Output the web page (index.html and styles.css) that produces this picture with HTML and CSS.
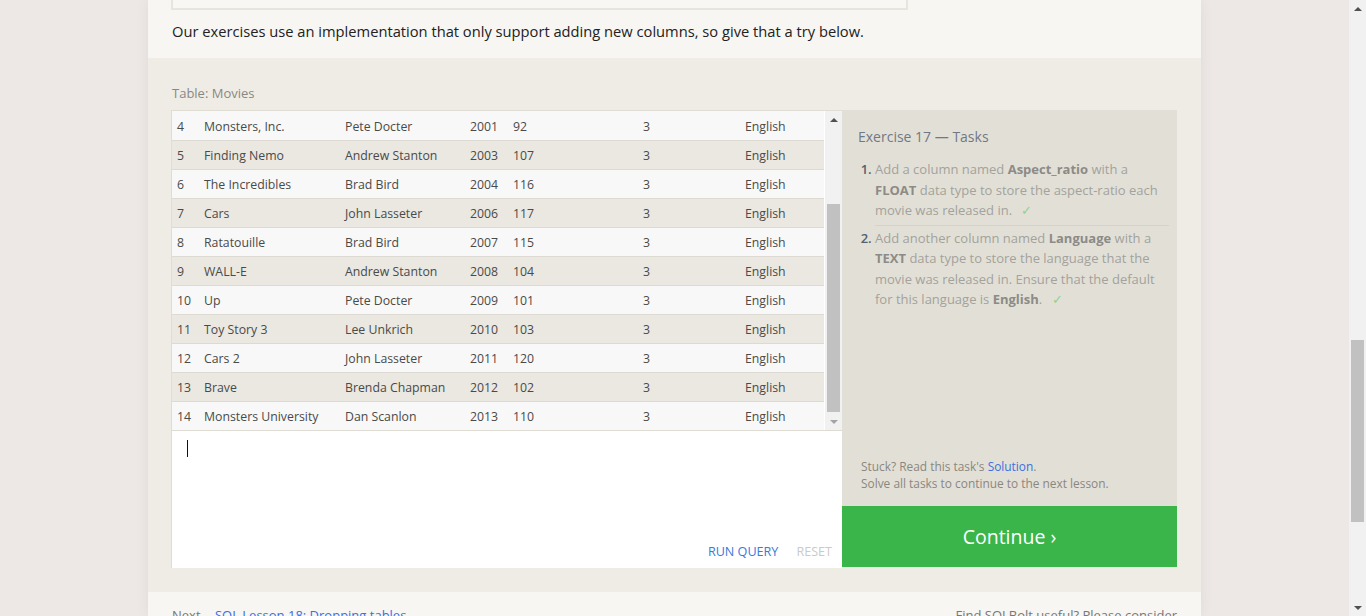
FILE: index.html
```html
<!DOCTYPE html>
<html>
<head>
<meta charset="utf-8">
<link rel="stylesheet" href="styles.css">
</head>
<body>
<div class="window">
  <div class="page">
    <div class="gutter"></div>
    <main class="column">
      <section class="intro">
        <div class="prev-box"></div>
        <p class="intro-text">Our exercises use an implementation that only support adding new columns, so give that a try below.</p>
      </section>
      <section class="exercise">
        <div class="table-label">Table: Movies</div>
        <div class="workspace">
          <div class="left-panel">
            <div class="results">
              <div class="results-scroll">
                <table class="movies">
                  <colgroup>
                    <col class="c-id"><col class="c-title"><col class="c-dir"><col class="c-year"><col class="c-len"><col class="c-ar"><col class="c-lang">
                  </colgroup>
                  <tbody>
                    <tr><td>4</td><td>Monsters, Inc.</td><td>Pete Docter</td><td>2001</td><td>92</td><td>3</td><td>English</td></tr>
                    <tr><td>5</td><td>Finding Nemo</td><td>Andrew Stanton</td><td>2003</td><td>107</td><td>3</td><td>English</td></tr>
                    <tr><td>6</td><td>The Incredibles</td><td>Brad Bird</td><td>2004</td><td>116</td><td>3</td><td>English</td></tr>
                    <tr><td>7</td><td>Cars</td><td>John Lasseter</td><td>2006</td><td>117</td><td>3</td><td>English</td></tr>
                    <tr><td>8</td><td>Ratatouille</td><td>Brad Bird</td><td>2007</td><td>115</td><td>3</td><td>English</td></tr>
                    <tr><td>9</td><td>WALL-E</td><td>Andrew Stanton</td><td>2008</td><td>104</td><td>3</td><td>English</td></tr>
                    <tr><td>10</td><td>Up</td><td>Pete Docter</td><td>2009</td><td>101</td><td>3</td><td>English</td></tr>
                    <tr><td>11</td><td>Toy Story 3</td><td>Lee Unkrich</td><td>2010</td><td>103</td><td>3</td><td>English</td></tr>
                    <tr><td>12</td><td>Cars 2</td><td>John Lasseter</td><td>2011</td><td>120</td><td>3</td><td>English</td></tr>
                    <tr><td>13</td><td>Brave</td><td>Brenda Chapman</td><td>2012</td><td>102</td><td>3</td><td>English</td></tr>
                    <tr><td>14</td><td>Monsters University</td><td>Dan Scanlon</td><td>2013</td><td>110</td><td>3</td><td>English</td></tr>
                  </tbody>
                </table>
              </div>
              <div class="sb sb-small">
                <div class="sb-btn"><span class="arrow-up"></span></div>
                <div class="sb-track"><div class="sb-thumb table-thumb"></div></div>
                <div class="sb-btn"><span class="arrow-down"></span></div>
              </div>
            </div>
            <div class="editor">
              <div class="cursor-line"><span class="cursor"></span></div>
              <div class="editor-actions">
                <span class="btn-run">RUN QUERY</span>
                <span class="btn-reset">RESET</span>
              </div>
            </div>
          </div>
          <div class="right-panel">
            <div class="tasks">
              <h3 class="tasks-title">Exercise 17 — Tasks</h3>
              <ol class="task-list">
                <li class="task">Add a column named <b>Aspect_ratio</b> with a <b>FLOAT</b> data type to store the aspect-ratio each movie was released in. <span class="check">✓</span></li>
                <li class="task">Add another column named <b>Language</b> with a <b>TEXT</b> data type to store the language that the movie was released in. Ensure that the default for this language is <b>English</b>. <span class="check">✓</span></li>
              </ol>
              <div class="stuck">
                <div>Stuck? Read this task's <a class="link">Solution</a>.</div>
                <div>Solve all tasks to continue to the next lesson.</div>
              </div>
            </div>
            <a class="continue">Continue ›</a>
          </div>
        </div>
      </section>
      <section class="footer">
        <span class="next">Next <a class="link next-link">SQL Lesson 18: Dropping tables</a></span>
        <span class="support">Find SQLBolt useful? Please consider</span>
      </section>
    </main>
    <div class="gutter"></div>
  </div>
  <div class="sb sb-page">
    <div class="sb-btn"><span class="arrow-up"></span></div>
    <div class="sb-track"><div class="sb-thumb page-thumb"></div></div>
    <div class="sb-btn"><span class="arrow-down"></span></div>
  </div>
</div>
</body>
</html>
```

FILE: styles.css
```css
* { box-sizing: border-box; }
html, body { margin: 0; padding: 0; height: 616px; overflow: hidden; }
body {
  font-family: "Open Sans", "Noto Sans", "Liberation Sans", sans-serif;
  background: #ede8e5;
  color: #333;
}
.window { display: flex; height: 616px; }
.page { flex: 1; display: flex; min-width: 0; }
.gutter { width: 148px; flex: none; }
.column {
  width: 1053px;
  flex: none;
  display: flex;
  flex-direction: column;
  box-shadow: 0 0 14px rgba(0,0,0,0.06);
}
.intro { background: #f7f6f2; height: 58px; flex: none; padding: 0 23px; }
.prev-box {
  width: 737px;
  height: 10px;
  border: 2px solid #e7e5dc;
  border-top: none;
  background: #f8f7f4;
}
.intro-text {
  margin: 10px 0 0 1px;
  font-size: 14.7px;
  line-height: 22px;
  color: #222;
}
.exercise {
  background: #efece5;
  height: 534px;
  flex: none;
  padding: 27px 24px 24px 23px;
  display: flex;
  flex-direction: column;
}
.table-label {
  font-size: 13px;
  color: #8a8884;
  line-height: 16px;
  margin-left: 1px;
  height: 25px;
}
.workspace { display: flex; height: 458px; }
.left-panel {
  width: 671px;
  display: flex;
  flex-direction: column;
  border-left: 1px solid #e0ddd5;
  border-top: 1px solid #e0ddd5;
  background: #fff;
}
.results { display: flex; height: 320px; border-bottom: 1px solid #dedbd3; }
.results-scroll { flex: 1; overflow: hidden; }
.movies {
  border-collapse: collapse;
  table-layout: fixed;
  width: 652px;
  font-size: 12.3px;
  color: #4a4a48;
}
.c-id { width: 27px; }
.c-title { width: 141px; }
.c-dir { width: 125px; }
.c-year { width: 43px; }
.c-len { width: 130px; }
.c-ar { width: 102px; }
.c-lang { width: 84px; }
.movies td {
  height: 29px;
  padding: 2px 0 0 5px;
  border-bottom: 1px solid #dcdad3;
  white-space: nowrap;
  overflow: hidden;
}
.movies tr:nth-child(odd) td { background: #f8f8f8; }
.movies tr:nth-child(even) td { background: #eae8e1; }
.movies tr:last-child td { border-bottom: none; }

.sb { display: flex; flex-direction: column; width: 17px; background: #f1f1f1; flex: none; }
.sb-btn { height: 17px; display: flex; align-items: center; justify-content: center; }
.sb-track { flex: 1; padding: 0 2px; }
.sb-thumb { background: #c1c1c1; }
.table-thumb { margin-top: 76px; height: 208px; }
.page-thumb { margin-top: 323px; height: 182px; }
.arrow-up { width: 0; height: 0; border-left: 4px solid transparent; border-right: 4px solid transparent; border-bottom: 4px solid #505050; }
.arrow-down { width: 0; height: 0; border-left: 4px solid transparent; border-right: 4px solid transparent; border-top: 4px solid #505050; }
.sb-small .arrow-down { border-top-color: #a3a3a3; }

.editor {
  flex: 1;
  display: flex;
  flex-direction: column;
  justify-content: space-between;
  padding: 9px 10px 8px 15px;
}
.cursor-line { height: 17px; }
.cursor { display: block; width: 1px; height: 17px; background: #111; }
.editor-actions { display: flex; justify-content: flex-end; gap: 18px; font-size: 12.6px; line-height: 16px; }
.btn-run { color: #3d78d8; }
.btn-reset { color: #c8cbc8; }

.right-panel { width: 335px; display: flex; flex-direction: column; margin-bottom: 1px; }
.tasks {
  flex: 1;
  background: #e2e0d6;
  padding: 16px 8px 14px 16px;
  display: flex;
  flex-direction: column;
}
.tasks-title {
  margin: 0;
  font-weight: normal;
  font-size: 14px;
  line-height: 22px;
  color: #707886;
}
.task-list {
  margin: 10px 0 0 0;
  padding: 0 0 0 17px;
  font-size: 13px;
  line-height: 20.5px;
  color: #a3a29d;
  flex: 1;
}
.task { padding: 1px 0 4px 0; }
.task + .task { border-top: 1px solid #d5d3c9; padding-top: 2px; }
.task::marker { color: #56606e; font-weight: 600; }
.task b { color: #8c8b87; font-weight: 700; }
.check { color: #92d192; margin-left: 6px; }
.stuck { font-size: 11.9px; line-height: 17px; color: #8a8780; padding-left: 3px; }
.link { color: #3a6fe0; text-decoration: none; }
.continue {
  height: 61px;
  background: #3ab54a;
  color: #fff;
  font-size: 19.5px;
  display: flex;
  align-items: center;
  justify-content: center;
  text-decoration: none;
}
.footer {
  flex: 1;
  background: #f7f6f2;
  padding: 13px 24px 0 24px;
  display: flex;
  justify-content: space-between;
  font-size: 13px;
  line-height: 20px;
  color: #777;
}
.next-link { margin-left: 11px; }
.sb-page { height: 616px; }
```
